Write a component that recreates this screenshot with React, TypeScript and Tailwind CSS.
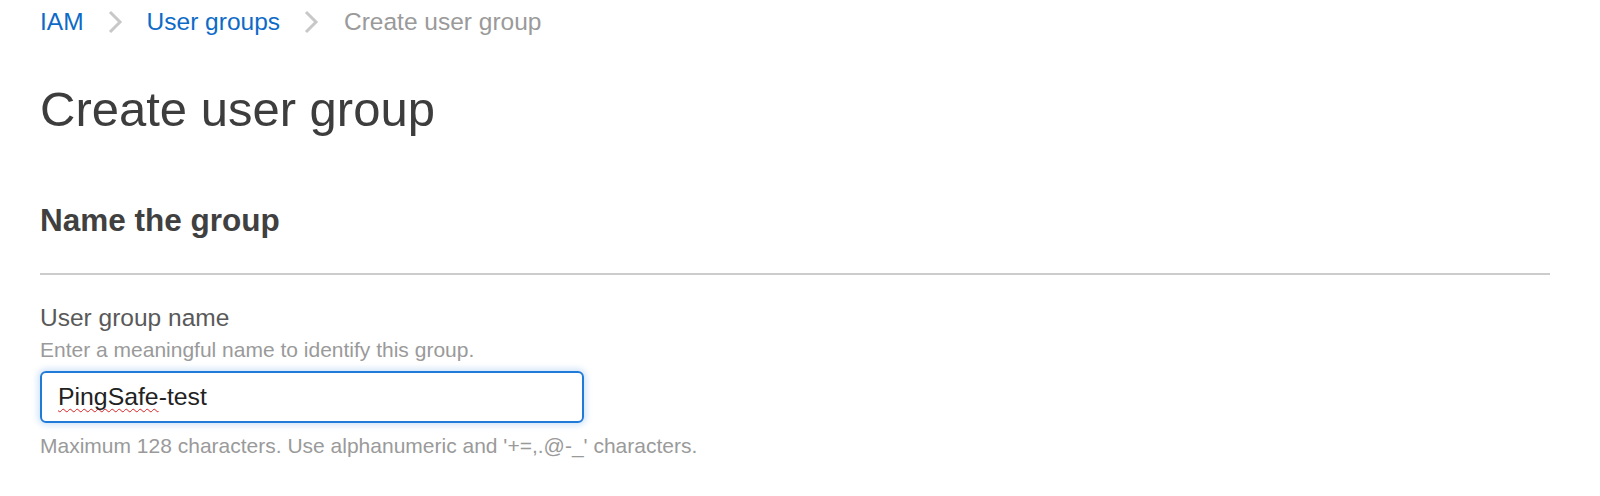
import React from "react";

function Chevron() {
  return (
    <svg width="16" height="24" viewBox="0 0 16 24" className="shrink-0" aria-hidden="true">
      <polyline points="3,2 13,12 3,22" fill="none" stroke="#c8c8c8" strokeWidth="3" />
    </svg>
  );
}

export default function App() {
  return (
    <div
      className="w-[1600px] h-[496px] bg-white overflow-hidden pl-10 pr-[50px]"
      style={{ fontFamily: '"Liberation Sans", Arial, sans-serif' }}
    >
      {/* Breadcrumb */}
      <nav className="flex items-center pt-1 h-[40px] text-[24.5px] leading-[36px]">
        <span className="text-[#0d6bc7]">IAM</span>
        <span className="ml-[23px] mr-[24px] flex items-center">
          <Chevron />
        </span>
        <span className="text-[#0d6bc7]">User groups</span>
        <span className="ml-[23px] mr-[25px] flex items-center">
          <Chevron />
        </span>
        <span className="text-[#9a9a9a]">Create user group</span>
      </nav>

      {/* Title */}
      <h1 className="mt-[41px] text-[49px] leading-[56px] text-[#3d3d3d] font-normal">
        Create user group
      </h1>

      {/* Section heading */}
      <h2 className="mt-[63px] text-[31.5px] leading-[40px] font-bold text-[#404040]">
        Name the group
      </h2>

      <div className="mt-[33px] h-[2px] bg-[#cccccc]" />

      {/* Field */}
      <div className="mt-[27px]">
        <div className="text-[24.5px] leading-[32px] text-[#595959]">User group name</div>
        <div className="mt-[2px] text-[21px] leading-[28px] text-[#9a9a9a]">
          Enter a meaningful name to identify this group.
        </div>
        <div className="mt-[7px] w-[544px] h-[52px] rounded-[6px] border-[2px] border-[#1f7ad8] shadow-[0_0_6px_2px_rgba(30,120,220,0.22)] flex items-center pl-[16px]">
          <span className="text-[24.8px] leading-[28px] text-[#222222]">
            <span className="underline decoration-wavy decoration-[#e02020] decoration-[1px] underline-offset-[3px] [text-decoration-skip-ink:none]">
              PingSafe
            </span>
            -test
          </span>
        </div>
        <div className="mt-[9px] text-[21px] leading-[28px] text-[#9a9a9a]">
          Maximum 128 characters. Use alphanumeric and '+=,.@-_' characters.
        </div>
      </div>
    </div>
  );
}
